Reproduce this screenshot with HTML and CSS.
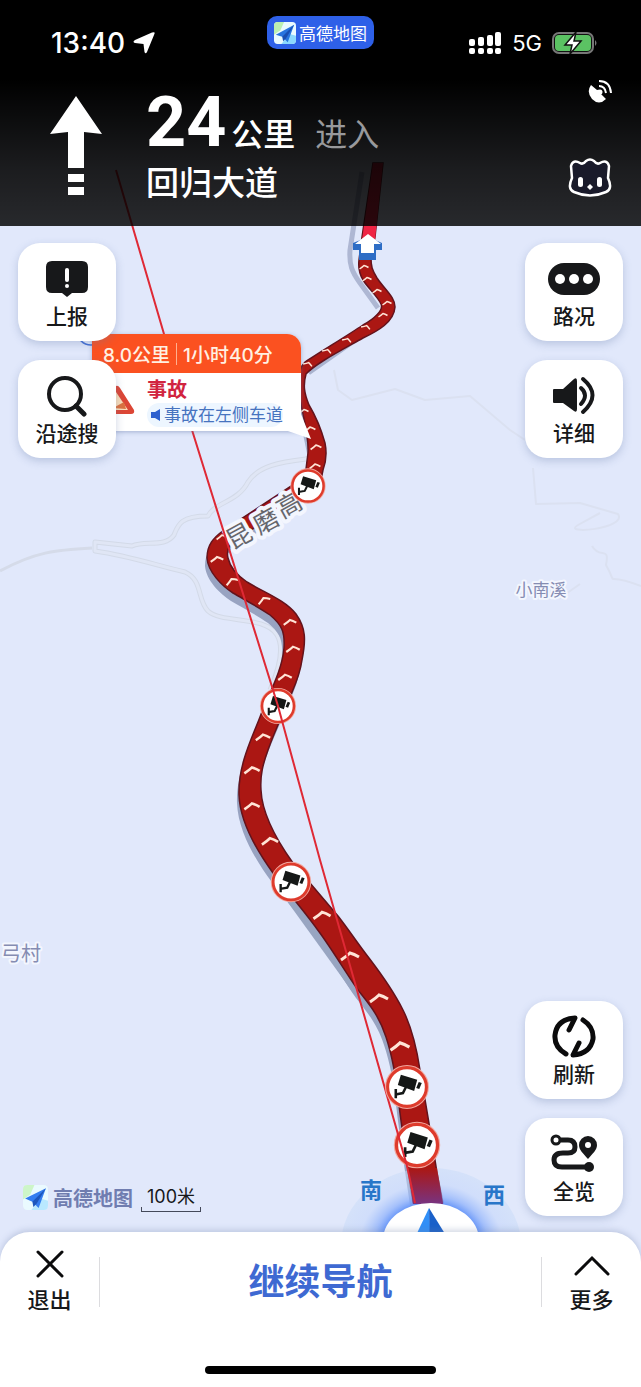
FILE: index.html
```html
<!DOCTYPE html>
<html lang="zh-CN">
<head>
<meta charset="utf-8">
<meta name="viewport" content="width=device-width, initial-scale=1">
<title>高德地图</title>
<link rel="stylesheet" href="styles.css">
</head>
<body>
<div class="app">
  <div class="map">
    <svg class="scene" viewBox="0 0 641 1387" preserveAspectRatio="xMidYMin slice" role="img" aria-label="导航路线">
      <defs>
        <linearGradient id="fade" x1="0" y1="1168" x2="0" y2="1205" gradientUnits="userSpaceOnUse">
          <stop offset="0" stop-color="#4c4ce0" stop-opacity="0"/><stop offset="1" stop-color="#4c4ce0" stop-opacity=".55"/>
        </linearGradient>
        <radialGradient id="halo">
          <stop offset="0.5" stop-color="#4a82f7"/><stop offset="0.64" stop-color="#8fb2fb" stop-opacity=".75"/><stop offset="0.8" stop-color="#c0d4fb" stop-opacity=".5"/><stop offset="1" stop-color="#c8dbf8" stop-opacity=".5"/>
        </radialGradient>
        <path id="road-near" d="M305 477L224 530C213 538 207 545 207 558C208 572 222 586 233 593C245 600 260 608 270 615C282 625 285 632 284 648C282 672 268 695 260 717C252 738 238 765 239 795C240 825 260 855 273 873C285 889 305 912 317 929C330 946 346 973 358 990C368 1003 379 1015 386 1037C392 1055 396 1075 399 1105C402 1130 408 1170 413 1203H443L437 1173C432 1140 425 1100 420 1070C417 1050 412 1028 403 1010C394 992 382 975 369 958C358 944 349 930 338 916L293 863C278 842 262 815 261 790C260 775 263 764 268 750C275 730 284 712 290 697C295 685 300 675 302 660C306 640 306 628 296 614C285 600 265 593 247 582C238 576 230 567 228 558C226 550 230 543 238 538L318 488Z"/>
        <path id="road-far" d="M373 163L362 237L359 260C358 268 359 273 363 280C368 288 378 297 381 304C384 310 374 319 363 325C345 337 320 352 305 362C297 370 297 385 300 400C304 420 309 436 308 453L304 485H320L323 470C326 462 327 453 325 443C320 425 315 415 309 405C304 393 303 385 306 374C315 364 340 351 363 338C378 331 394 322 395 307C395 297 385 290 377 278C372 270 371 266 371 258L375 237L383 163Z"/>
        <g id="camera">
          <circle r="20" fill="#fff" stroke="#f1a79f" stroke-width="3"/>
          <circle r="19" fill="#fff" stroke="#de3b2c" stroke-width="3"/>
          <path d="M-6-12L10-7L7 4L-9-2Z M11.500-5L14.500-4L12 2L9 1Z" fill="#151817"/>
          <path d="M-1 0L-4 6L-10 7M-11 2V11" fill="none" stroke="#151817" stroke-width="2.500"/>
        </g>
        <path id="chevron" d="M-9 4Q-3 0 0-3Q4-2 9 1" fill="none" stroke="#ffe4d6" stroke-width="3"/>
      </defs>

      <g fill="none" stroke-linejoin="round">
        <path d="M0 571C35 552 55 550 92 548" stroke="#d5dbe9" stroke-width="3"/>
        <path d="M320 449L306 459C280 462 258 466 248 482C238 502 215 502 208 516C180 516 178 525 174 535C165 548 145 540 132 546L95 542V551C130 556 155 565 185 572C203 580 197 600 208 611C222 624 265 615 277 635C286 650 276 676 270 690" stroke="#d3dae8" stroke-width="5"/>
        <path d="M320 449L306 459C280 462 258 466 248 482C238 502 215 502 208 516C180 516 178 525 174 535C165 548 145 540 132 546L95 542V551C130 556 155 565 185 572C203 580 197 600 208 611C222 624 265 615 277 635C286 650 276 676 270 690" stroke="#e0e6f5" stroke-width="3"/>
        <path d="M334 370L338 390L352 400L395 389L425 400L470 396L510 430L525 440M533 468L536 504L580 503L618 514C628 529 560 535 578 525L600 513M592 546C600 560 610 545 606 565C620 590 600 570 641 586M560 598L580 584" stroke="#dbe1f1" stroke-width="2"/>
      </g>

      <path d="M362 172L350 250C349 265 352 272 360 283L378 308" fill="none" stroke="#aeb7d3" stroke-width="5"/>
      <path d="M375 325L308 372M302 412L313 465" fill="none" stroke="#a9b3cf" stroke-width="7"/>
      <use href="#road-near" x="-2" y="8" fill="#98a3c1"/>
      <path d="M284 897L296 895L362 990L354 994Z" fill="#98a5c1"/>
      <g stroke="#63131c" stroke-width="1.5">
        <use href="#road-near" fill="#ab1713"/>
        <use href="#road-far" fill="#ab1713"/>
      </g>
      <path d="M373 163L362 240H375L383 163Z" fill="#ef2444"/>

      <g>
        <use href="#chevron" transform="translate(364 267) scale(.5)"/>
        <use href="#chevron" transform="translate(367 279) scale(.5)"/>
        <use href="#chevron" transform="translate(377 291) scale(.5)"/>
        <use href="#chevron" transform="translate(387 303) scale(.5)"/>
        <use href="#chevron" transform="translate(383 315) scale(.5)"/>
        <use href="#chevron" transform="translate(366 327) rotate(25) scale(.5)"/>
        <use href="#chevron" transform="translate(347 340) rotate(25) scale(.5)"/>
        <use href="#chevron" transform="translate(327 351) rotate(25) scale(.5)"/>
        <use href="#chevron" transform="translate(308 364) rotate(25) scale(.5)"/>
        <use href="#chevron" transform="translate(304 411) scale(.5)"/>
        <use href="#chevron" transform="translate(310 429) scale(.6)"/>
        <use href="#chevron" transform="translate(316 447) scale(.6)"/>
        <use href="#chevron" transform="translate(315 466) scale(.6)"/>
        <use href="#chevron" transform="translate(222 537) scale(.6)"/>
        <use href="#chevron" transform="translate(217 559) scale(.7)"/>
        <use href="#chevron" transform="translate(232 581) rotate(-15) scale(.7)"/>
        <use href="#chevron" transform="translate(264 600) rotate(-15) scale(.7)"/>
        <use href="#chevron" transform="translate(290 622) scale(.7)"/>
        <use href="#chevron" transform="translate(293 649) scale(.75)"/>
        <use href="#chevron" transform="translate(285 677) scale(.75)"/>
        <use href="#chevron" transform="translate(263 737) scale(.8)"/>
        <use href="#chevron" transform="translate(252 770) scale(.85)"/>
        <use href="#chevron" transform="translate(252 806) scale(.85)"/>
        <use href="#chevron" transform="translate(270 841) scale(.9)"/>
        <use href="#chevron" transform="translate(322 915) scale(.95)"/>
        <use href="#chevron" transform="translate(350 956)"/>
        <use href="#chevron" transform="translate(379 998)"/>
        <use href="#chevron" transform="translate(400 1046) scale(1.05)"/>
      </g>

      <g class="road-name">
        <text transform="translate(239 536) rotate(-29)">昆</text>
        <text transform="translate(266 521) rotate(-29)">磨</text>
        <text transform="translate(289 505) rotate(-29)">高</text>
      </g>

      <path d="M368 237L353 243V250H359V260H376V250H382V243Z" fill="#2e6dc5"/>
      <path d="M368 234L355 244H361V253H374V244H381Z" fill="#fff"/>

      <ellipse cx="431" cy="1245" rx="90" ry="77" fill="url(#halo)"/>
      <path d="M408 1168H437L443 1204H413Z" fill="#ab1713"/>
      <path d="M408 1168L413 1204H443L437 1168Z" fill="url(#fade)"/>
      <ellipse cx="431" cy="1240" rx="48" ry="37" fill="#fff"/>
      <path d="M429 1208L409 1250H431Z" fill="#318ff7"/>
      <path d="M429 1208L455 1250H430Z" fill="#1960c9"/>

      <use href="#camera" transform="translate(308 486) scale(.82)"/>
      <use href="#camera" transform="translate(278 706) scale(.84)"/>
      <use href="#camera" transform="translate(291 882) scale(.94)"/>
      <use href="#camera" transform="translate(417 1145) scale(1.08)"/>
      <path d="M116 170L164 334L192 430L278 706L320 860L407 1166L415 1203" fill="none" stroke="#df2935" stroke-width="2"/>
      <use href="#camera" transform="translate(407 1087) scale(1.02)"/>

      <g class="place">
        <text x="541" y="596" font-size="17">小南溪</text>
        <text x="21" y="961" font-size="20">弓村</text>
      </g>
      <g class="compass">
        <text x="371" y="1198">南</text>
        <text x="494" y="1203">西</text>
      </g>
      <circle cx="91" cy="331" r="14" fill="#e9effd" stroke="#416ed5" stroke-width="1.5"/>
    </svg>

    <div class="callout">
      <div class="callout-head"><span>8.0公里</span><span class="bar"></span><span>1小时40分</span></div>
      <div class="callout-body">
        <svg class="warn" viewBox="0 0 38 30" aria-hidden="true"><path d="M19 1Q21 0 23 3L37 25Q38 29 34 29H4Q0 29 2 25L16 3Q17 1 19 1Z" fill="#dc4635"/><path d="M19 7L31 25H8Z" fill="#f9ddb9"/><path d="M16 23L27 17L29 24Z" fill="#db713f"/></svg>
        <div>
          <div class="event">事故</div>
          <div class="detail"><svg viewBox="0 0 10 12" width="10" height="12" aria-hidden="true"><path d="M0 3H4L9 0V12L4 9H0Z" fill="#2f61cf"/></svg>事故在左侧车道</div>
        </div>
      </div>
      <svg class="tail" viewBox="0 0 26 26" aria-hidden="true"><path d="M16 0L26 25L0 16Z" fill="#fff"/></svg>
    </div>
  </div>

  <header class="top">
    <div class="status">
      <div class="clock">13:40
        <svg width="22" height="22" viewBox="0 0 22 22" aria-hidden="true"><path d="M21.500.5Q22 1 21 3L14 20Q12.500 22.500 11.500 20L10.500 12L2 11Q-1 10 2 8L19 .5Q21 0 21.500.5Z" fill="#fff"/></svg>
      </div>
      <div class="badge">
        <svg width="22" height="22" viewBox="0 0 24 24" aria-hidden="true"><rect width="24" height="24" rx="4" fill="#eafaff"/><path d="M0 14V4Q0 0 4 0H11L7 9Z" fill="#bdf0b1"/><path d="M8 24L17 13L24 15V20Q24 24 20 24Z" fill="#8bd8ff"/><path d="M22 3L2 14L9 16L15 22Z" fill="#2874df"/><path d="M22 3L9 16L10 21L13 18Z" fill="#194fb2"/></svg>
        <span>高德地图</span>
      </div>
      <div class="signals">
        <svg width="34" height="24" viewBox="0 0 34 24" aria-label="信号"><g fill="#fff"><rect x="1" y="8" width="6" height="7" rx="2"/><rect x="10" y="6" width="6" height="9" rx="2"/><rect x="19" y="4" width="6" height="11" rx="2"/><rect x="27" y="1" width="6" height="14" rx="2"/><rect x="1" y="17" width="6" height="6" rx="2"/><rect x="10" y="17" width="6" height="6" rx="2"/><rect x="19" y="17" width="6" height="6" rx="2"/><rect x="27" y="17" width="6" height="6" rx="2"/></g></svg>
        <span>5G</span>
        <svg width="46" height="24" viewBox="0 0 46 24" aria-label="充电中"><rect x="1" y="2" width="40" height="20" rx="6" fill="#111" stroke="#777" stroke-width="2"/><rect x="3" y="4" width="36" height="16" rx="4" fill="#5bc263"/><path d="M43 9Q46 12 43 15Z" fill="#777"/><path d="M24 1L13 14H20L18 23L29 10H22Z" fill="#fff" stroke="#111" stroke-width="1.500"/></svg>
      </div>
    </div>
    <div class="guide">
      <svg class="ahead" width="52" height="100" viewBox="0 0 52 100" aria-label="直行"><path d="M26 0L52 38L34 36V72H18V36L0 38ZM18 78H34V86H18ZM18 91H34V99H18Z" fill="#fff"/></svg>
      <div class="turn">
        <div class="distance"><b>24</b><span class="unit">公里</span><span class="enter">进入</span></div>
        <div class="street">回归大道</div>
      </div>
      <div class="extras">
        <svg width="24" height="24" viewBox="0 0 24 24" aria-label="卫星信号"><path d="M3 5Q-2 12 4 19Q11 26 18 19L13 14A3 3 0 0 0 9 10Z" fill="#fff"/><circle cx="12" cy="12" r="2.500" fill="#fff"/><path d="M11 1Q22 1 23 13M11 6Q17 6 18 13" fill="none" stroke="#fff" stroke-width="2"/></svg>
        <svg width="44" height="40" viewBox="0 0 44 40" aria-label="语音助手"><path d="M3 8Q5 1 12 5Q15 7 18 3Q22 0 26 3Q29 7 32 5Q39 1 41 8L40 20Q45 31 38 34Q22 41 6 34Q-1 31 4 20Z" fill="#191a2a" stroke="#fff" stroke-width="2.500"/><g fill="#fff"><rect x="10" y="19" width="5" height="10" rx="2.500"/><rect x="29" y="19" width="5" height="10" rx="2.500"/><path d="M22 26L25 29L22 32L19 29Z"/></g></svg>
      </div>
    </div>
  </header>

  <main class="controls">
    <div class="row">
      <div class="stack">
        <button class="tile" type="button"><svg width="44" height="40" viewBox="0 0 44 40" aria-hidden="true"><path d="M7 1H37Q43 1 43 7V27Q43 33 37 33H27L22 37L17 33H7Q1 33 1 27V7Q1 1 7 1Z" fill="#17181a"/><path d="M22 10V20" stroke="#fff" stroke-width="4" stroke-linecap="round"/><circle cx="22" cy="26" r="2" fill="#fff"/></svg>上报</button>
        <button class="tile" type="button"><svg width="44" height="44" viewBox="0 0 44 44" aria-hidden="true"><circle cx="20" cy="21" r="16" fill="none" stroke="#17181a" stroke-width="4"/><path d="M31 33L39 41" stroke="#17181a" stroke-width="5" stroke-linecap="round"/></svg>沿途搜</button>
      </div>
      <div class="stack">
        <button class="tile" type="button"><svg width="54" height="40" viewBox="0 0 54 40" aria-hidden="true"><rect x="1" y="3" width="52" height="32" rx="16" fill="#17181a"/><g fill="#fff"><circle cx="13" cy="19" r="5"/><circle cx="27" cy="19" r="5"/><circle cx="41" cy="19" r="5"/></g></svg>路况</button>
        <button class="tile" type="button"><svg width="44" height="44" viewBox="0 0 44 44" aria-hidden="true"><path d="M2 16H11L22 6Q25 4 25 8V36Q25 40 22 38L11 30H2Q1 30 1 29V17Q1 16 2 16Z" fill="#17181a"/><path d="M29 15Q37 22 29 31M31 6Q50 22 31 39" fill="none" stroke="#17181a" stroke-width="4" stroke-linecap="round"/></svg>详细</button>
      </div>
    </div>
    <div class="row low">
      <div class="copyright">
        <svg width="25" height="25" viewBox="0 0 24 24" aria-hidden="true"><rect width="24" height="24" rx="4" fill="#eafaff"/><path d="M0 14V4Q0 0 4 0H11L7 9Z" fill="#cdf5c8"/><path d="M8 24L17 13L24 15V20Q24 24 20 24Z" fill="#b9e8ff"/><path d="M22 3L2 13L9 16L15 22Z" fill="#347df0"/><path d="M22 3L9 16L10 21L13 18Z" fill="#1d56bc"/></svg>
        <span class="brand">高德地图</span>
        <span class="scale">100米</span>
      </div>
      <div class="stack">
        <button class="tile" type="button"><svg width="44" height="44" viewBox="0 0 44 44" aria-hidden="true"><path d="M14 40Q2 33 3 21Q5 5 23 4L17 16M31 6Q42 13 41 25Q38 40 21 41L27 29" fill="none" stroke="#0b0b0c" stroke-width="5" stroke-linecap="round" stroke-linejoin="round"/></svg>刷新</button>
        <button class="tile" type="button"><svg width="48" height="44" viewBox="0 0 48 44" aria-hidden="true"><g fill="none" stroke="#17181a"><circle cx="6" cy="9" r="4" stroke-width="3"/><path d="M11 9H18Q25 9 25 16Q25 22 18 22H13Q4 22 4 29Q4 36 12 36H38" stroke-width="5"/></g><circle cx="39" cy="36" r="5" fill="#17181a"/><path d="M38 28C33 22 29 19 29 14A9 9 0 0 1 47 14C47 19 43 22 38 28Z" fill="#17181a"/><circle cx="38" cy="14" r="3" fill="#fff"/></svg>全览</button>
      </div>
    </div>
  </main>

  <footer class="dock">
    <div class="actions">
      <button class="side" type="button"><svg width="28" height="32" viewBox="0 0 28 32" aria-hidden="true"><path d="M2 4L26 28M26 4L2 28" stroke="#0b0b0c" stroke-width="3" stroke-linecap="round"/></svg>退出</button>
      <button class="resume" type="button">继续导航</button>
      <button class="side" type="button"><svg width="36" height="32" viewBox="0 0 36 32" aria-hidden="true"><path d="M2 26L18 10L34 26" fill="none" stroke="#0b0b0c" stroke-width="3" stroke-linecap="round"/></svg>更多</button>
    </div>
    <div class="home"></div>
  </footer>
</div>
</body>
</html>
```
FILE: styles.css
```css
* { box-sizing: border-box; }

body {
  margin: 0;
  font-family: Inter, "Noto Sans CJK SC", sans-serif;
  color: #17181a;
}

button {
  border: 0;
  margin: 0;
  font: inherit;
  color: inherit;
  background: none;
  cursor: pointer;
}

svg { display: block; flex: none; }

.app {
  position: relative;
  display: flex;
  flex-direction: column;
  min-height: 100vh;
  overflow: hidden;
  background: #e1e8fb;
}

.map { position: absolute; inset: 0; }

.scene { width: 100%; height: 100%; }

.road-name text,
.place text {
  text-anchor: middle;
  paint-order: stroke;
  stroke: #f3f6fe;
  stroke-width: 4px;
  stroke-linejoin: round;
}

.road-name text {
  font-size: 25px;
  fill: #66666c;
  stroke-width: 8px;
  dominant-baseline: central;
}

.place text { fill: #858cb2; }

.compass text {
  text-anchor: middle;
  font-size: 22px;
  font-weight: 700;
  fill: #2876c9;
}

.callout {
  position: absolute;
  left: 92px;
  top: 334px;
  width: 209px;
  border-radius: 6px 14px 0 0;
  background: #fff;
  box-shadow: 0 1px 4px #6478a880;
}

.callout-head {
  display: flex;
  align-items: center;
  gap: 6px;
  height: 39px;
  padding: 0 11px;
  border-radius: 6px 14px 0 0;
  background: #fb5120;
  color: #fff0e2;
  font-size: 19px;
  font-weight: 500;
  white-space: nowrap;
}

.bar { width: 1px; height: 22px; background: #ffb08f; }

.callout-body {
  display: flex;
  gap: 12px;
  height: 58px;
  padding: 4px 0 0 5px;
}

.warn { width: 38px; height: 30px; margin-top: 8px; }

.event {
  color: #d12440;
  font-size: 20px;
  font-weight: 700;
  line-height: 26px;
}

.detail {
  display: flex;
  align-items: center;
  gap: 3px;
  padding-left: 4px;
  border-radius: 12px;
  background: #edf6ff;
  color: #4673bf;
  font-size: 17px;
  line-height: 24px;
  white-space: nowrap;
}

.tail { position: absolute; right: -10px; bottom: -9px; width: 26px; height: 26px; }

.top {
  position: relative;
  min-height: 225px;
  color: #fff;
  background: linear-gradient(#000 35%, #000000e0 75%, #000000d2);
}

.status {
  display: grid;
  grid-template-columns: 1fr auto 1fr;
  align-items: center;
  height: 80px;
  padding: 6px 43px 0;
}

.clock {
  display: flex;
  align-items: center;
  gap: 8px;
  padding-left: 8px;
  font-size: 28px;
  font-weight: 500;
}

.badge {
  display: flex;
  align-items: center;
  align-self: start;
  gap: 3px;
  height: 33px;
  margin-top: 10px;
  padding: 0 7px;
  border-radius: 10px;
  background: #2e60e8;
  font-size: 17px;
}

.signals {
  display: flex;
  align-items: center;
  justify-content: flex-end;
  gap: 10px;
  font-size: 22px;
}

.guide {
  display: flex;
  align-items: flex-start;
  padding: 0 29px 24px 50px;
}

.ahead { margin-top: 16px; }

.turn { flex: 1; margin-left: 44px; }

.distance {
  display: flex;
  align-items: baseline;
  height: 84px;
  line-height: 84px;
  font-size: 32px;
}

.distance b { font-family: Roboto, sans-serif; font-size: 70px; }

.unit { margin-left: 5px; font-weight: 500; }

.enter { margin-left: 20px; color: #98999c; }

.street { font-size: 33px; font-weight: 500; line-height: 38px; }

.extras {
  display: flex;
  flex-direction: column;
  align-items: flex-end;
  justify-content: space-between;
  height: 118px;
}

.controls {
  position: relative;
  flex: 1;
  display: flex;
  flex-direction: column;
  justify-content: space-between;
  padding: 17px 18px 16px;
}

.row { display: flex; justify-content: space-between; }

.low { align-items: flex-end; }

.stack { display: flex; flex-direction: column; gap: 19px; }

.tile {
  display: flex;
  flex-direction: column;
  align-items: center;
  justify-content: flex-end;
  gap: 3px;
  width: 98px;
  height: 98px;
  padding: 0 0 10px;
  border-radius: 22px;
  background: #fff;
  box-shadow: 0 3px 8px #5f75a650;
  font-size: 21px;
  line-height: 28px;
  font-weight: 500;
}

.copyright {
  display: flex;
  align-items: center;
  gap: 5px;
  padding: 0 0 4px 5px;
}

.brand { color: #707db0; font-size: 20px; font-weight: 700; }

.scale {
  position: relative;
  margin-left: 3px;
  padding: 0 6px;
  font-size: 18px;
  line-height: 30px;
}

.scale::after {
  content: "";
  position: absolute;
  inset: auto 0 0;
  height: 4px;
  border: solid #44495a;
  border-width: 0 1px 1px;
}

.dock {
  position: relative;
  height: 155px;
  padding: 0 0 13px;
  display: flex;
  flex-direction: column;
  justify-content: space-between;
  border-radius: 30px 30px 0 0;
  background: #fff;
  box-shadow: 0 -2px 6px #7081a850;
}

.actions { display: flex; align-items: center; height: 100px; }

.side {
  display: flex;
  flex-direction: column;
  align-items: center;
  width: 99px;
  padding: 4px 0 0;
  font-size: 22px;
  font-weight: 500;
  line-height: 40px;
}

.resume {
  flex: 1;
  height: 50px;
  padding: 0;
  border: solid #dcdcdf;
  border-width: 0 1px;
  color: #3e69d2;
  font-size: 36px;
  font-weight: 600;
  line-height: 48px;
}

.home {
  align-self: center;
  width: 36%;
  height: 8px;
  border-radius: 4px;
  background: #000;
}
```
